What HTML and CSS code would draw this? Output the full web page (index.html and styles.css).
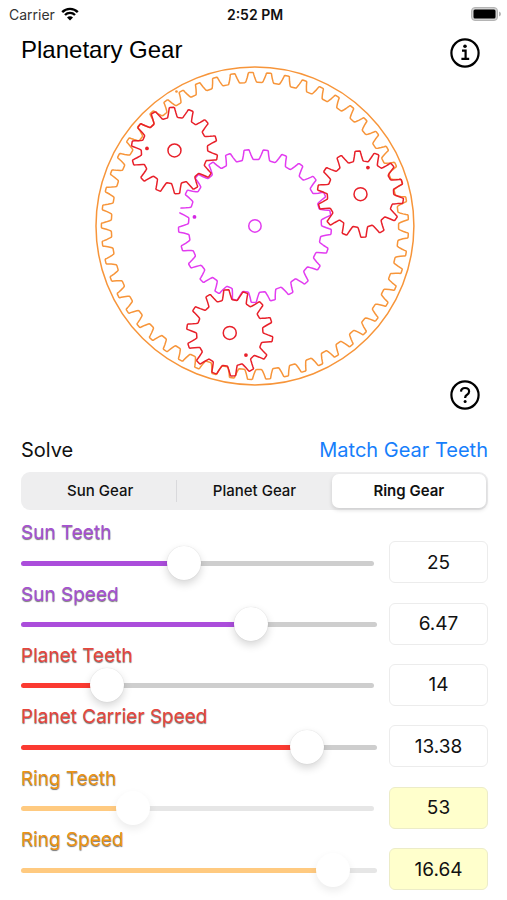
FILE: index.html
```html
<!DOCTYPE html>
<html lang="en">
<head>
<meta charset="utf-8">
<meta name="viewport" content="width=device-width, initial-scale=1">
<title>Planetary Gear</title>
<link rel="stylesheet" href="styles.css">
</head>
<body>
<header class="status">
  <div class="carrier">Carrier
    <svg class="wifi" viewBox="0 0 18 14" aria-hidden="true"><path d="M1.2 5.1a11 11 0 0 1 15.6 0M4 8a7 7 0 0 1 10 0" fill="none" stroke="#000" stroke-width="2.4"/><path d="M9 13.6 6 10.5a4.2 4.2 0 0 1 6 0z"/></svg>
  </div>
  <div class="clock">2:52 PM</div>
  <svg class="battery" viewBox="0 0 30 14" aria-hidden="true"><rect x=".5" y=".5" width="26" height="13" rx="3.5" fill="#d0d0d0" stroke="#b4b4b4"/><rect x="2.5" y="2.5" width="22" height="9" rx="1.5"/><path d="M28 4.5q2 .8 2 2.5t-2 2.5z" fill="#b4b4b4"/></svg>
</header>
<main>
  <section class="stage">
    <h1>Planetary Gear</h1>
    <button class="round info" type="button" aria-label="Information">
      <svg viewBox="0 0 30 30"><circle cx="15" cy="15" r="13.6"/><path d="M12 12.7h3.6v8M11.4 20.9h7.8"/><circle class="dot" cx="15" cy="8.3" r="1.8"/></svg>
    </button>
    <svg class="gears" id="gears" viewBox="0 0 320 320" role="img" aria-label="Planetary gear set"></svg>
    <button class="round help" type="button" aria-label="Help">
      <svg viewBox="0 0 30 30"><circle cx="15" cy="15" r="13.6"/><path d="M11 11.6C11.1 9.4 12.700 8 15 8C17.400 8 19.100 9.400 19.100 11.500C19.100 13.200 18.200 14 17 14.800C15.700 15.600 15.100 16.200 15.100 18"/><circle class="dot" cx="15.1" cy="21.6" r="1.5"/></svg>
    </button>
  </section>
  <div class="solve">
    <h2 id="solve">Solve</h2>
    <button class="match" type="button">Match Gear Teeth</button>
  </div>
  <div class="segments" role="radiogroup" aria-labelledby="solve">
    <label><input type="radio" name="solve" value="sun"><span>Sun Gear</span></label>
    <label><input type="radio" name="solve" value="planet"><span>Planet Gear</span></label>
    <label><input type="radio" name="solve" value="ring" checked><span>Ring Gear</span></label>
  </div>
  <div class="controls">
    <div class="control sun teeth">
      <label for="sun-teeth">Sun Teeth</label>
      <input class="slider" id="sun-teeth" type="range" min="4" max="50" value="25">
      <input class="value" type="text" value="25" aria-label="Sun Teeth value">
    </div>
    <div class="control sun">
      <label for="sun-speed">Sun Speed</label>
      <input class="slider" id="sun-speed" type="range" min="-20" max="20" step="0.01" value="6.47">
      <input class="value" type="text" value="6.47" aria-label="Sun Speed value">
    </div>
    <div class="control planet teeth">
      <label for="planet-teeth">Planet Teeth</label>
      <input class="slider" id="planet-teeth" type="range" min="4" max="50" value="14">
      <input class="value" type="text" value="14" aria-label="Planet Teeth value">
    </div>
    <div class="control planet">
      <label for="carrier-speed">Planet Carrier Speed</label>
      <input class="slider" id="carrier-speed" type="range" min="-20" max="20" step="0.01" value="13.38">
      <input class="value" type="text" value="13.38" aria-label="Planet Carrier Speed value">
    </div>
    <div class="control ring teeth solved">
      <label for="ring-teeth">Ring Teeth</label>
      <input class="slider" id="ring-teeth" type="range" min="18" max="136" value="53" disabled>
      <input class="value" type="text" value="53" aria-label="Ring Teeth value" readonly>
    </div>
    <div class="control ring solved">
      <label for="ring-speed">Ring Speed</label>
      <input class="slider" id="ring-speed" type="range" min="-20" max="20" step="0.01" value="16.64" disabled>
      <input class="value" type="text" value="16.64" aria-label="Ring Speed value" readonly>
    </div>
  </div>
</main>
<script src="gears.js"></script>
</body>
</html>
```
FILE: styles.css
```css
* { box-sizing: border-box; }

body {
  margin: 0;
  min-height: 100vh;
  display: flex;
  flex-direction: column;
  background: #fff;
  color: #111;
  font-family: Inter, "Liberation Sans", sans-serif;
}

button, input { font: inherit; color: inherit; }
h1, h2 { margin: 0; font-weight: 400; }

.status {
  display: grid;
  grid-template-columns: 1fr auto 1fr;
  align-items: center;
  height: 28px;
  padding: 0 6px 0 9px;
  font-size: 14px;
}
.carrier { display: flex; align-items: center; gap: 6px; color: #333; }
.wifi { width: 18px; height: 14px; }
.clock { font-weight: 600; color: #111; }
.battery { width: 30px; height: 14px; justify-self: end; }

main {
  flex: 1;
  display: flex;
  flex-direction: column;
  padding: 0 19px 10px 21px;
}

.stage {
  display: grid;
  grid-template-columns: 1fr auto;
  grid-template-rows: auto 1fr;
  padding-top: 8px;
}
.stage h1 {
  grid-area: 1 / 1;
  font: 24px/28px "Liberation Sans", Arial, sans-serif;
  color: #000;
}
.gears {
  grid-area: 1 / 1 / 3 / 3;
  justify-self: center;
  width: 68.5%;
  margin: 30px 0 24px;
  overflow: visible;
  fill: none;
  stroke-width: 1.5;
  stroke-linejoin: round;
}
.round {
  z-index: 1;
  width: 30px;
  height: 30px;
  margin-right: 8px;
  padding: 0;
  border: 0;
  background: none;
}
.round svg { display: block; fill: none; stroke: #000; stroke-width: 2.2; }
.round .dot { fill: #000; stroke: none; }
.info { grid-area: 1 / 2; margin-top: 2px; }
.help { grid-area: 2 / 2; align-self: end; }

.ring-line { stroke: #f7953a; }
.sun-line { stroke: #e23cf0; }
.planet-line { stroke: #e8202a; }
.ring-dot { fill: #f7953a; }
.sun-dot { fill: #d428e4; }
.planet-dot { fill: #e8202a; }

.solve {
  display: flex;
  justify-content: space-between;
  align-items: center;
  height: 28px;
  margin: 26px 0 8px;
}
.solve h2, .match { font-size: 20px; line-height: 28px; }
.match { padding: 0; border: 0; background: none; color: #167efb; }

.segments {
  display: grid;
  grid-template-columns: repeat(3, 1fr);
  height: 38px;
  padding: 2px;
  border-radius: 9px;
  background: #eeeeef;
  font-size: 15px;
  font-weight: 500;
}
.segments label { display: grid; position: relative; }
.segments input { position: absolute; opacity: 0; }
.segments span { display: grid; place-items: center; border-radius: 7px; }
.segments label:first-child::after {
  content: "";
  position: absolute;
  right: 0;
  top: 6px;
  bottom: 6px;
  width: 1px;
  background: #d9d9dc;
}
.segments :checked + span {
  background: #fff;
  font-weight: 600;
  box-shadow: 0 2px 4px rgba(0, 0, 0, .14);
}

.controls {
  flex: 1;
  display: grid;
  grid-template-rows: repeat(6, 1fr);
  padding-top: 12px;
}
.control {
  display: grid;
  grid-template-columns: 1fr 99px;
  grid-template-rows: 21px 40px;
  align-content: end;
  column-gap: 12px;
}
.control label {
  justify-self: start;
  font-size: 19px;
  line-height: 21px;
  color: var(--text);
  text-shadow: 0 1px 1px rgba(0, 0, 0, .55);
}
.sun { --text: #a750d3; --fill: #ab4ddb; }
.planet { --text: #e8463c; --fill: #fb3a31; }
.ring { --text: #ee9413; --fill: #ff9500; }

.slider {
  grid-area: 2 / 1;
  align-self: center;
  appearance: none;
  width: auto;
  height: 34px;
  margin: 0;
  background: none;
}
.teeth .slider { margin-right: 3px; }
.slider::-webkit-slider-runnable-track {
  height: 5px;
  border-radius: 3px;
  background: linear-gradient(to right, var(--fill) var(--stop), #cecece var(--stop));
}
.slider::-webkit-slider-thumb {
  appearance: none;
  width: 34px;
  height: 34px;
  margin-top: -15px;
  border-radius: 50%;
  background: #fff;
  box-shadow: 0 4px 9px rgba(0, 0, 0, .16), 0 0 1px rgba(0, 0, 0, .16);
}
.solved .slider::-webkit-slider-runnable-track {
  background: linear-gradient(to right, #ffca80 var(--stop), #e6e6e6 var(--stop));
}
.solved .slider::-webkit-slider-thumb { box-shadow: 0 4px 9px rgba(0, 0, 0, .08); }

.value {
  grid-area: 1 / 2 / 3 / 3;
  align-self: end;
  width: 100%;
  height: 42px;
  padding: 0;
  border: 1px solid #ececec;
  border-radius: 6px;
  background: #fff;
  font-size: 19px;
  text-align: center;
}
.solved .value { background: #ffffcc; border-color: #ececc8; }
```
FILE: gears.js
```js
const svg = document.getElementById("gears");
const NS = "http://www.w3.org/2000/svg";

function add(tag, attrs) {
  const node = document.createElementNS(NS, tag);
  for (const key in attrs) node.setAttribute(key, attrs[key]);
  svg.append(node);
}

// Half a tooth from crest to root: [share of the pitch, share of the height].
const FLANK = [[0.1, 1], [0.14, 0.95], [0.16, 0.8], [0.21, 0.5], [0.28, 0.18], [0.32, 0.04], [0.37, 0]];

// Angles are in degrees, clockwise from twelve o'clock.
function gear({ x, y, teeth, root, tip, phase, first = 0, open = false, name }) {
  const pitch = 360 / teeth;
  const points = [];
  const plot = (position, height) => {
    const a = (phase + position * pitch) * Math.PI / 180;
    const r = root + (tip - root) * height;
    points.push((x + r * Math.sin(a)).toFixed(2) + " " + (y - r * Math.cos(a)).toFixed(2));
  };
  for (let i = first; i < first + teeth; i++) {
    FLANK.forEach(([w, h]) => plot(i + w, h));
    [...FLANK].reverse().forEach(([w, h]) => plot(i + 1 - w, h));
  }
  add("path", { d: "M" + points.join("L") + (open ? "" : "Z"), class: name + "-line" });
}

const circle = (cx, cy, r, cls) => add("circle", { cx, cy, r, class: cls });

circle(160, 160, 159, "ring-line");
gear({ x: 160, y: 160, teeth: 53, root: 143.7, tip: 153.6, phase: 5.25, name: "ring" });
circle(81.5, 25.5, 1.3, "ring-dot");

gear({ x: 160, y: 160, teeth: 25, root: 66.5, tip: 76.5, phase: 8.1, first: 19, open: true, name: "sun" });
circle(160, 160, 6.2, "sun-line");
circle(99.5, 151, 1.9, "sun-dot");

[
  { x: 79.5, y: 84.5, phase: -3.5, dot: [52, 82.5] },
  { x: 265.6, y: 128.2, phase: -3.9, dot: [273, 101.6] },
  { x: 134.8, y: 267, phase: -4.5, dot: [151, 289.2] }
].forEach((p) => {
  gear({ x: p.x, y: p.y, teeth: 14, root: 33.2, tip: 43.2, phase: p.phase, name: "planet" });
  circle(p.x, p.y, 6.5, "planet-line");
  circle(p.dot[0], p.dot[1], 1.9, "planet-dot");
});

// The coloured part of each track ends under the middle of its thumb.
document.querySelectorAll(".slider").forEach((slider) => {
  const paint = () => {
    const f = (slider.value - slider.min) / (slider.max - slider.min);
    slider.style.setProperty("--stop", `calc(17px + (100% - 34px) * ${f.toFixed(4)})`);
  };
  slider.addEventListener("input", paint);
  paint();
});
```
